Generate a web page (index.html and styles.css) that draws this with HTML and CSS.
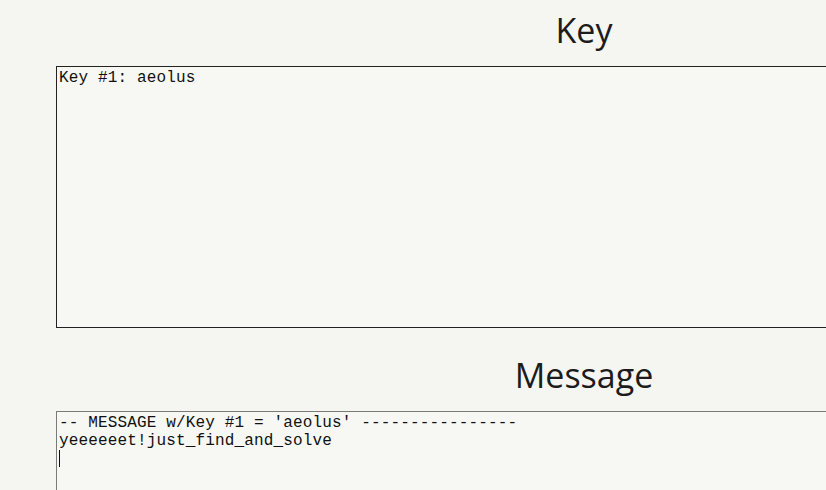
FILE: index.html
```html
<!DOCTYPE html>
<html>
<head>
<meta charset="utf-8">
<link rel="stylesheet" href="styles.css">
</head>
<body>
<main class="page">
  <section class="block">
    <h2 class="title">Key</h2>
    <div class="box box-key">Key #1: aeolus</div>
  </section>
  <section class="block block-message">
    <h2 class="title">Message</h2>
    <div class="box box-msg">-- MESSAGE w/Key #1 = 'aeolus' ----------------
yeeeeeet!just_find_and_solve
<span class="caret"></span></div>
  </section>
</main>
</body>
</html>
```
FILE: styles.css
```css
html, body {
  margin: 0;
  padding: 0;
  background: #f5f5f1;
  overflow: hidden;
  width: 826px;
  height: 490px;
}
.page {
  padding: 6px 0 0 56px;
  width: 1056px;
}
.block {
  display: flex;
  flex-direction: column;
  gap: 12px;
}
.block-message {
  margin-top: 23px;
}
.title {
  margin: 0;
  font-family: "Open Sans", sans-serif;
  font-weight: 500;
  font-size: 34px;
  line-height: 48px;
  color: #1c1c1c;
  text-align: center;
}
.box {
  box-sizing: border-box;
  width: 1056px;
  height: 262px;
  padding: 2px;
  font-family: "Liberation Mono", monospace;
  font-size: 16px;
  letter-spacing: 0.15px;
  line-height: 18px;
  color: #111;
  white-space: pre;
  background: #f7f7f4;
}
.box-key {
  border: 1px solid #222;
}
.box-msg {
  border: 1px solid #7a7a7a;
}
.caret {
  display: inline-block;
  width: 1px;
  height: 17px;
  background: #111;
  vertical-align: top;
}
```
